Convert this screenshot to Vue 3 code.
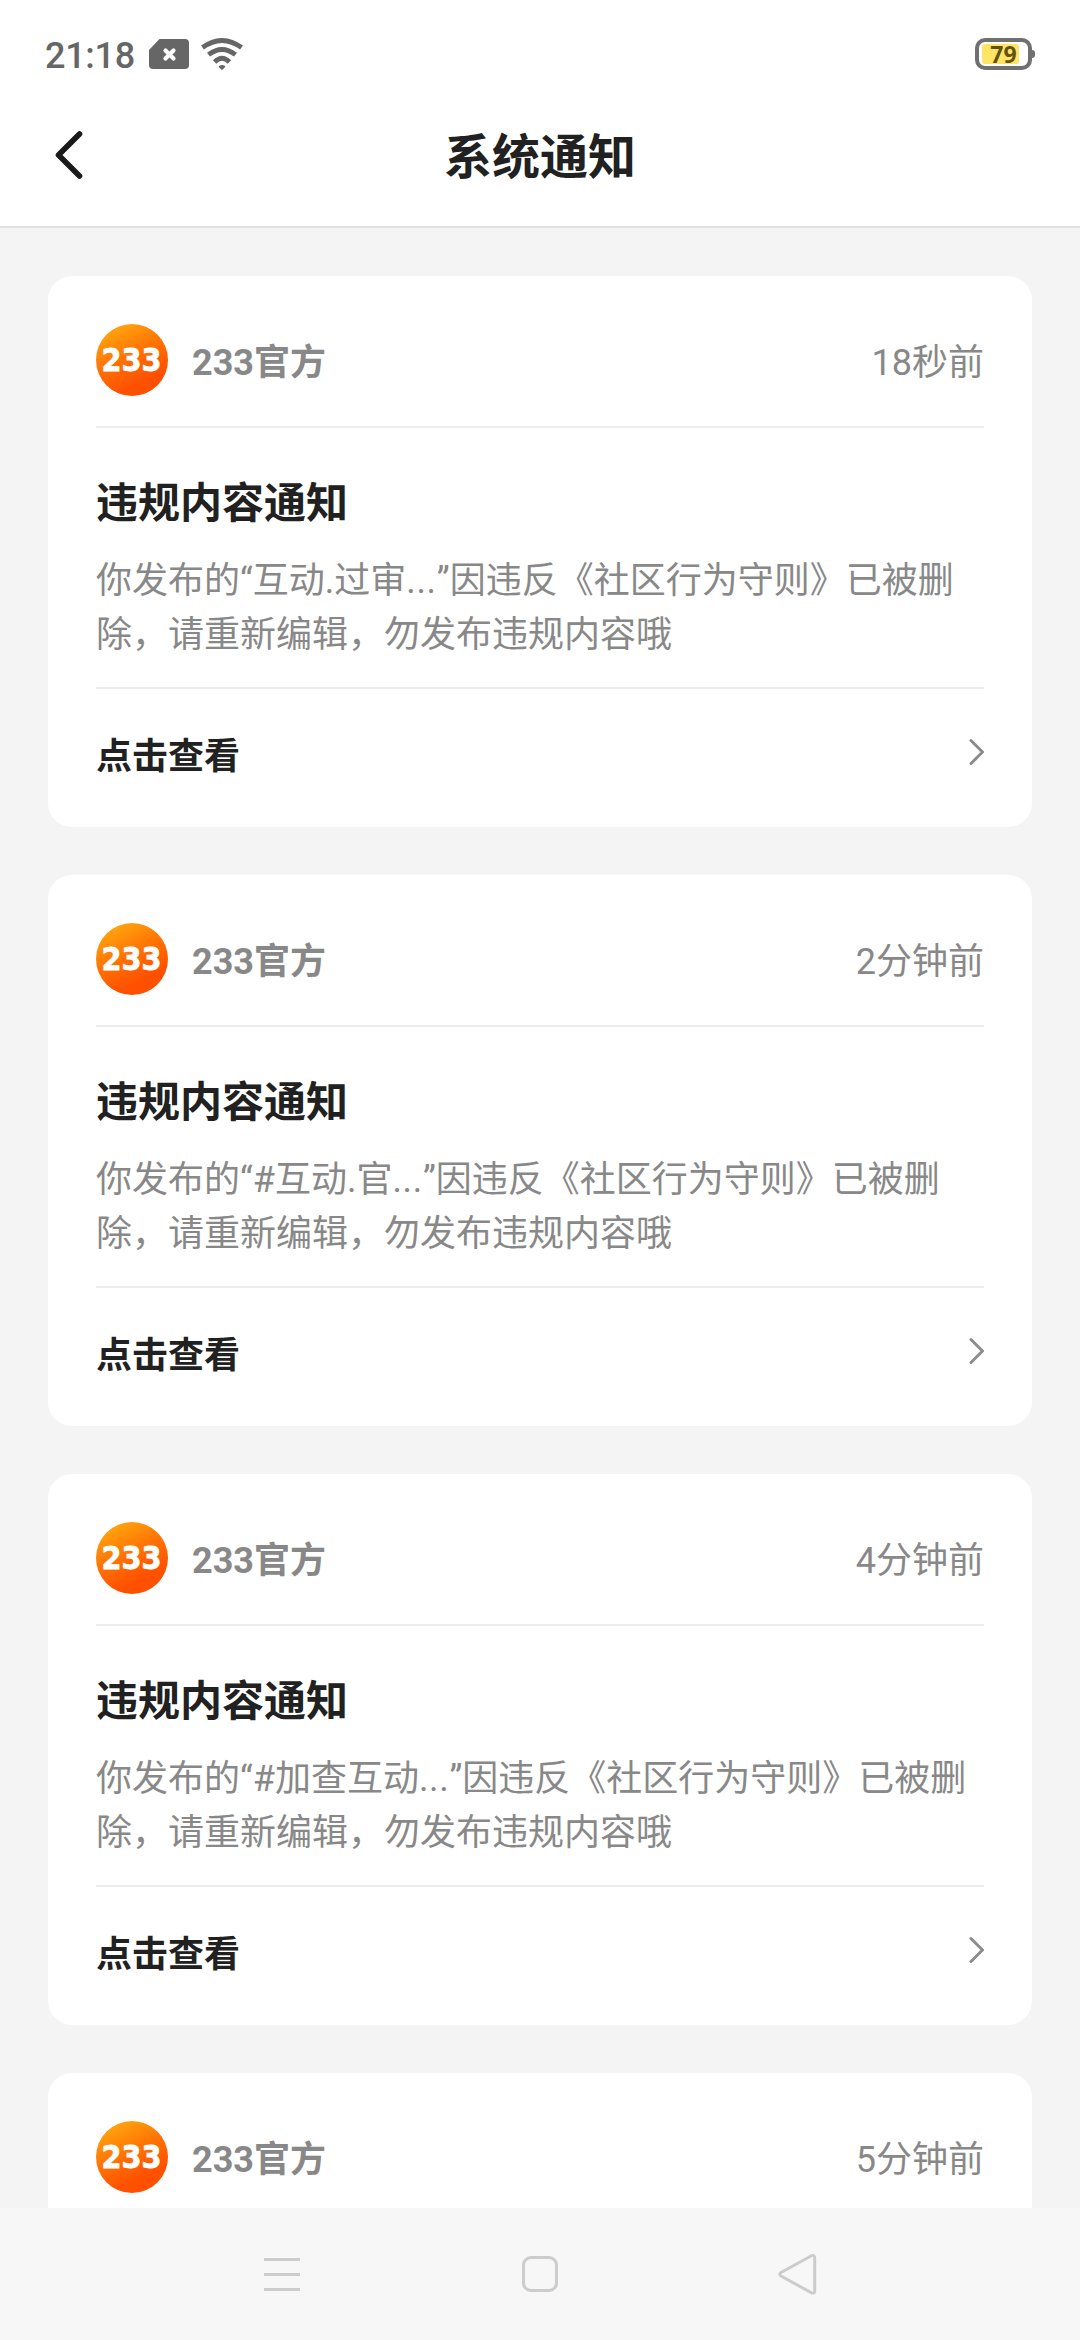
<script setup>
const notices = [
  { id: 1, time: '18秒前', topic: '互动.过审' },
  { id: 2, time: '2分钟前', topic: '#互动.官' },
  { id: 3, time: '4分钟前', topic: '#加查互动' },
  { id: 4, time: '5分钟前', topic: '' },
]
</script>

<template>
  <div class="screen">
    <header class="top">
      <div class="status">
        <span class="clock">21:18</span>
        <svg class="sim" viewBox="0 0 40 30" width="40" height="30">
          <path d="M10.500 0H36a4 4 0 0 1 4 4V26a4 4 0 0 1-4 4H4a4 4 0 0 1-4-4V11z" fill="#666" />
          <path d="M16.500 11.500l8 8M24.500 11.500l-8 8" stroke="#fff" stroke-width="4.200" stroke-linecap="round" />
        </svg>
        <svg class="wifi" viewBox="0 0 42 32" width="42" height="32" fill="none" stroke="#666" stroke-width="4.800">
          <path d="M1.500 9.500Q21-4.600 40.500 9.500" />
          <path d="M7.500 16.700Q21 6.200 34.500 16.700" />
          <path d="M13.600 24Q21 16.600 28.400 24" />
          <path d="M18.800 28.600Q21 27.600 23.200 28.600L21 30.800z" fill="#666" stroke-width="2" stroke-linejoin="round" />
        </svg>
        <div class="battery"><span class="level">79</span></div>
        <i class="nub"></i>
      </div>
      <div class="titlebar">
        <svg class="back" viewBox="0 0 28 48" width="28" height="48">
          <path d="M24.500 3L3.500 24L24.500 45" fill="none" stroke="#1a1a1a" stroke-width="5.600" stroke-linecap="round" stroke-linejoin="round" />
        </svg>
        <h1>系统通知</h1>
      </div>
    </header>

    <main class="list">
      <article v-for="n in notices" :key="n.id" class="card">
        <div class="sender">
          <svg class="logo" viewBox="0 0 72 72" width="72" height="72">
            <defs>
              <linearGradient :id="'sun' + n.id" x1="0.100" y1="0" x2="0.600" y2="1">
                <stop offset="0" stop-color="#ffb010" />
                <stop offset="0.500" stop-color="#ff7204" />
                <stop offset="0.850" stop-color="#ff5000" />
              </linearGradient>
            </defs>
            <circle cx="36" cy="36" r="36" :fill="`url(#sun${n.id})`" />
            <text class="mark" x="5.500" y="47.300" textLength="60" lengthAdjust="spacingAndGlyphs">233</text>
          </svg>
          <span class="name">233官方</span>
          <time>{{ n.time }}</time>
        </div>
        <template v-if="n.topic">
          <div class="content">
            <h2>违规内容通知</h2>
            <p>你发布的“{{ n.topic }}<span class="dots">...</span>”因违反《社区行为守则》已被删除，请重新编辑，勿发布违规内容哦</p>
          </div>
          <div class="action">
            <span>点击查看</span>
            <svg viewBox="0 0 16 28" width="16" height="28">
              <path d="M3 2.500L14.500 14L3 25.500" fill="none" stroke="#8c8c8c" stroke-width="3" stroke-linecap="round" stroke-linejoin="round" />
            </svg>
          </div>
        </template>
      </article>
    </main>

    <nav class="keys">
      <svg viewBox="0 0 44 44" width="44" height="44"><path d="M4 7.500H40M4 22.500H40M4 37.500H40" /></svg>
      <svg viewBox="0 0 44 44" width="44" height="44"><rect x="5.500" y="5.500" width="33" height="33" rx="7.500" /></svg>
      <svg viewBox="0 0 44 44" width="44" height="44"><path d="M35.500 3.700L5 20.500Q2.500 22.200 5 24L35.500 40.800Q38.700 42 38.700 38.500V6Q38.700 2.500 35.500 3.700z" /></svg>
    </nav>
  </div>
</template>

<style>
body {
  margin: 0;
}
</style>

<style scoped>
.screen {
  display: flex;
  flex-direction: column;
  width: 1080px;
  height: 2340px;
  overflow: hidden;
  background: #f4f4f4;
  color: #212121;
  font-family: Roboto, "Noto Sans CJK SC", sans-serif;
}
.top {
  flex: none;
  box-sizing: border-box;
  height: 228px;
  background: #fff;
  border-bottom: 2px solid #e0e0e0;
}
.status {
  display: flex;
  align-items: center;
  height: 108px;
  padding: 0 45px;
}
.clock {
  width: 104px;
  margin-top: 3px;
  font-size: 36px;
  font-weight: 500;
  line-height: 42px;
  letter-spacing: -0.3px;
  color: #666;
}
.wifi {
  margin-left: 12px;
}
.battery {
  box-sizing: border-box;
  width: 57px;
  height: 32px;
  margin-left: auto;
  padding: 2px 9px 2px 3px;
  border: 4px solid #707070;
  border-radius: 10px;
}
.level {
  display: block;
  height: 20px;
  border-radius: 3px;
  background: #ffe566;
  color: #63510f;
  font: 700 23px/20px "Noto Sans", sans-serif;
  text-align: center;
  text-indent: 6px;
}
.nub {
  width: 3px;
  height: 8px;
  border-radius: 0 4px 4px 0;
  background: #707070;
}
.titlebar {
  display: flex;
  align-items: center;
  height: 94px;
  padding: 0 55px;
}
h1 {
  flex: 1;
  margin: 6px 28px 0 0;
  font-size: 48px;
  font-weight: 700;
  line-height: 70px;
  text-align: center;
}
.list {
  flex: 1;
  min-height: 0;
  overflow: hidden;
  padding: 48px 48px 0;
}
.card {
  box-sizing: border-box;
  height: 551px;
  margin-bottom: 48px;
  padding: 0 48px;
  border-radius: 24px;
  background: #fff;
}
.sender {
  display: flex;
  align-items: center;
  height: 150px;
  border-bottom: 2px solid #ececec;
  color: #888;
  font-size: 36px;
  line-height: 54px;
}
.logo {
  margin-top: 18px;
  overflow: visible;
}
.mark {
  fill: #fff;
  stroke: #fff;
  stroke-width: 0.8px;
  font: 700 32px "DejaVu Sans", sans-serif;
}
.name {
  margin: 23px 0 0 24px;
  font-weight: 700;
}
time {
  margin: 23px 0 0 auto;
}
.content {
  box-sizing: border-box;
  height: 261px;
  padding-top: 44px;
  border-bottom: 2px solid #ececec;
}
h2 {
  margin: 0;
  font-size: 42px;
  font-weight: 700;
  line-height: 63px;
}
p {
  margin: 19px 0 0;
  font-size: 36px;
  line-height: 54px;
  color: #888;
}
.dots {
  letter-spacing: 0.7px;
}
.action {
  display: flex;
  align-items: center;
  justify-content: space-between;
  height: 128px;
  font-size: 36px;
  font-weight: 700;
}
.action svg {
  margin-bottom: 2px;
}
.keys {
  flex: none;
  display: flex;
  align-items: center;
  justify-content: space-between;
  height: 132px;
  padding: 0 260px;
  background: #f7f7f7;
}
.keys path,
.keys rect {
  fill: none;
  stroke: #ccc;
  stroke-width: 3px;
}
</style>
